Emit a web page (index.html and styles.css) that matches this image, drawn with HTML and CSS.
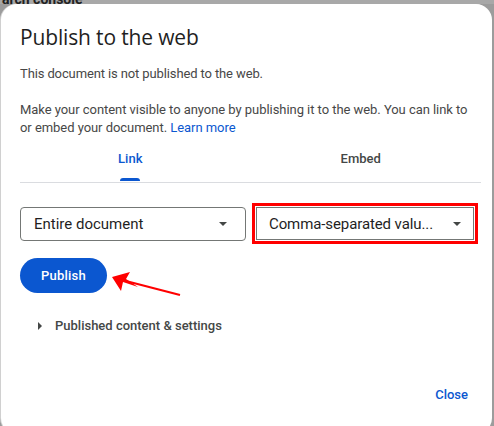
FILE: index.html
```html
<!DOCTYPE html>
<html>
<head>
<meta charset="utf-8">
<link rel="stylesheet" href="styles.css">
</head>
<body>
<div class="backdrop">
  <div class="bg-text">arch console</div>
  <div class="dialog">
    <h1 class="title">Publish to the web</h1>
    <p class="status">This document is not published to the web.</p>
    <p class="desc">Make your content visible to anyone by publishing it to the web. You can link to or embed your document. <a class="link" href="#">Learn more</a></p>
    <div class="tabs">
      <div class="tab active"><span class="tab-label">Link</span></div>
      <div class="tab"><span class="tab-label">Embed</span></div>
    </div>
    <div class="selects">
      <div class="select"><span>Entire document</span><span class="caret"></span></div>
      <div class="select highlighted"><span>Comma-separated valu...</span><span class="caret"></span></div>
    </div>
    <div class="publish-row">
      <button class="publish">Publish</button>
      <svg class="arrow" width="80" height="30" viewBox="0 0 80 30">
        <path d="M72 24 L14 9" stroke="#ff0000" stroke-width="2.2" fill="none"/>
        <path d="M4 6 L22 1 L18 8 L30 16 L15 11 L13 20 Z" fill="#ff0000"/>
      </svg>
    </div>
    <div class="expander"><span class="tri"></span><span>Published content &amp; settings</span></div>
    <div class="footer"><span class="close">Close</span></div>
  </div>
</div>
</body>
</html>
```
FILE: styles.css
```css
html, body {
  margin: 0;
  padding: 0;
}
body {
  width: 494px;
  height: 426px;
  overflow: hidden;
  background: #a3a3a3;
  font-family: Roboto, "Liberation Sans", sans-serif;
}
.backdrop {
  position: relative;
  width: 494px;
  height: 426px;
  background: linear-gradient(to bottom, #a8a8a8 0, #a8a8a8 4px, #9c9c9c 4px);
  overflow: hidden;
}
.bg-text {
  position: absolute;
  left: 2px;
  top: -9px;
  font-size: 14px;
  font-weight: 700;
  color: #222;
}
.dialog {
  position: absolute;
  left: 1px;
  top: 4px;
  width: 491px;
  height: 430px;
  box-sizing: border-box;
  background: #fff;
  border-radius: 16px;
  padding: 19px 20px 0 19px;
  box-shadow: -1px 0 0 #d0d0d0;
}
.title {
  margin: 0;
  font-family: "Open Sans", Roboto, sans-serif;
  font-weight: 400;
  font-size: 21px;
  line-height: 28px;
  color: #1f1f1f;
  letter-spacing: -0.15px;
}
.status {
  margin: 13px 0 0;
  font-size: 13px;
  line-height: 20px;
  color: #474747;
  letter-spacing: -0.12px;
}
.desc {
  margin: 17px 0 0;
  width: 450px;
  font-size: 13px;
  line-height: 18px;
  color: #474747;
  letter-spacing: -0.05px;
}
.link {
  color: #0b57d0;
  text-decoration: none;
}
.tabs {
  display: grid;
  grid-template-columns: 1fr 1fr;
  width: 461px;
  border-bottom: 1px solid #dadce0;
  margin-top: 1px;
}
.tab {
  display: flex;
  justify-content: center;
  height: 44px;
  box-sizing: border-box;
  padding: 11px 10px 0 0;
  font-size: 13px;
  font-weight: 500;
  color: #444746;
}
.tab-label {
  position: relative;
  line-height: 20px;
  height: 33px;
}
.tab.active .tab-label {
  color: #0b57d0;
}
.tab.active .tab-label::after {
  content: "";
  position: absolute;
  left: 2px;
  right: 2px;
  bottom: 1px;
  height: 3px;
  border-radius: 3px 3px 0 0;
  background: #0b57d0;
}
.selects {
  display: grid;
  grid-template-columns: 226px 218px;
  column-gap: 10px;
  margin-top: 24px;
}
.select {
  height: 34px;
  box-sizing: border-box;
  border: 1px solid #747775;
  border-radius: 4px;
  display: flex;
  align-items: center;
  justify-content: space-between;
  padding: 0 18px 0 13px;
  font-size: 15px;
  color: #1f1f1f;
}
.select.highlighted {
  border-radius: 0;
  outline: 3px solid #ff0000;
  outline-offset: 1px;
  height: 33px;
  padding: 0 12px 0 12px;
  letter-spacing: -0.1px;
}
.caret {
  width: 0;
  height: 0;
  border-left: 4px solid transparent;
  border-right: 4px solid transparent;
  border-top: 4px solid #444746;
}
.publish-row {
  position: relative;
  margin-top: 17px;
  height: 35px;
}
.publish {
  height: 35px;
  width: 87px;
  border: none;
  border-radius: 18px;
  background: #0b57d0;
  color: #fff;
  font-family: Roboto, sans-serif;
  font-weight: 500;
  font-size: 13px;
  padding: 0;
  letter-spacing: 0.2px;
}
.arrow {
  position: absolute;
  left: 88px;
  top: 13px;
}
.expander {
  margin-top: 23px;
  display: flex;
  align-items: center;
  gap: 13px;
  padding-left: 18px;
  font-size: 13px;
  font-weight: 500;
  line-height: 20px;
  color: #444746;
}
.tri {
  width: 0;
  height: 0;
  border-top: 4px solid transparent;
  border-bottom: 4px solid transparent;
  border-left: 4px solid #444746;
}
.footer {
  margin-top: 49px;
  display: flex;
  justify-content: flex-end;
  padding-right: 4px;
}
.close {
  font-size: 13px;
  font-weight: 500;
  line-height: 20px;
  color: #0b57d0;
}
```
